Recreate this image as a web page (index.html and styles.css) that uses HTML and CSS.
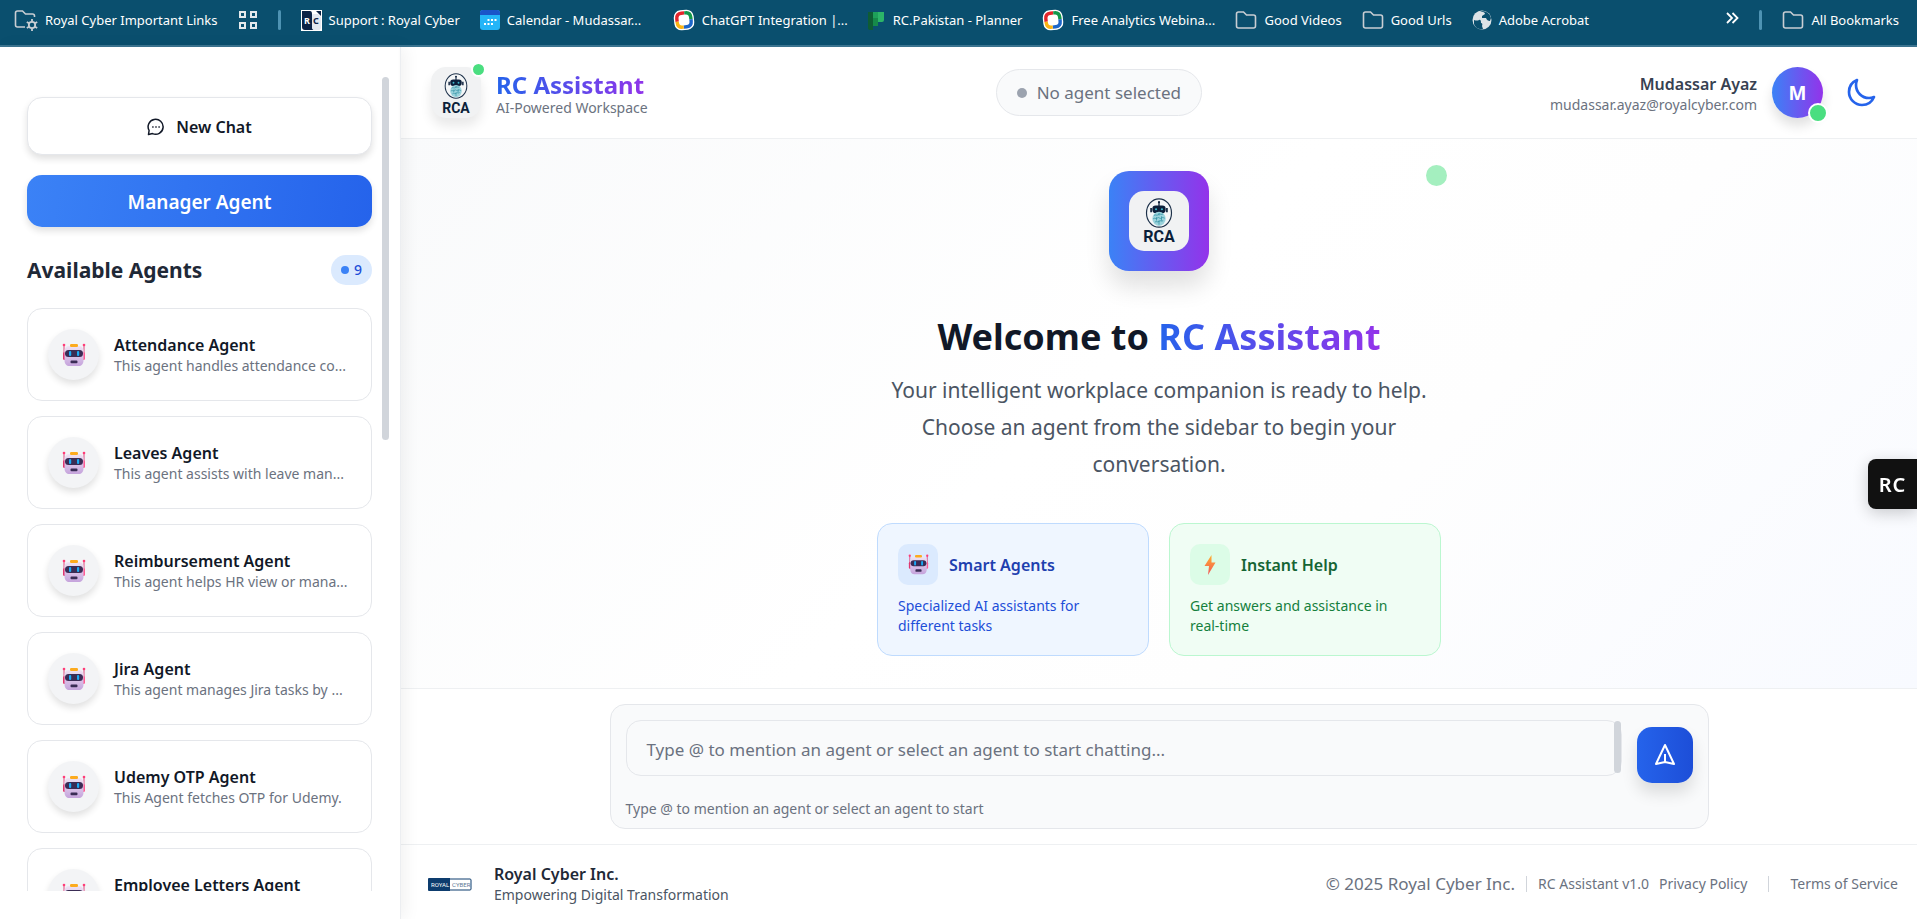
FILE: index.html
```html
<!DOCTYPE html>
<html lang="en">

<head>
    <meta charset="utf-8">
    <meta name="viewport" content="width=device-width, initial-scale=1.0">
    <title>RC Assistant</title>
    <link rel="stylesheet" href="styles.css">
</head>

<body>
    <!-- shared icons -->
    <svg class="sprite" aria-hidden="true">
        <defs>
            <linearGradient id="face" x1="0" y1="0" x2="0" y2="1">
                <stop offset="0" stop-color="#efe3f4" />
                <stop offset="1" stop-color="#c5a3dc" />
            </linearGradient>
            <linearGradient id="bolt" x1="0" y1="0" x2="0" y2="1">
                <stop offset="0" stop-color="#ffb02e" />
                <stop offset="1" stop-color="#f2555a" />
            </linearGradient>
        </defs>
        <symbol id="robot" viewBox="0 0 24 24">
            <path d="M2 2v10M22 2v10" stroke="#e0487f" stroke-width="1" />
            <circle cx="2" cy="2" r="1.3" fill="#ff3d78" />
            <circle cx="22" cy="2" r="1.3" fill="#ff3d78" />
            <rect x="1" y="9" width="3" height="8" rx="1.5" fill="#e0366e" />
            <rect x="20" y="9" width="3" height="8" rx="1.5" fill="#ff5c93" />
            <path d="M7 3h10c3 0 4.500 2 4.500 5v9c0 4-2 6-5 6h-9c-3 0-5-2-5-6V8c0-3 1.500-5 4.500-5z" fill="url(#face)" />
            <rect x="8" y="1" width="8" height="3" rx="1.2" fill="#fcab1e" />
            <rect x="3" y="7" width="18" height="7" rx="3.500" fill="#3a2c55" />
            <rect x="7" y="8" width="2.200" height="5" rx="1" fill="#19aaf5" />
            <rect x="15" y="8" width="2.200" height="5" rx="1" fill="#19aaf5" />
            <rect x="8.500" y="17.500" width="7" height="2.800" rx="1" fill="#3a2c55" />
        </symbol>
        <symbol id="rca" viewBox="0 0 32 36">
            <ellipse cx="16" cy="18" rx="15" ry="17" fill="#f4f6f7" stroke="#1c3049" stroke-width="1.400" />
            <path d="M16 5v5" stroke="#0b1f3a" stroke-width="1.500" />
            <circle cx="16" cy="5" r="1.300" fill="#0b1f3a" />
            <rect x="8" y="9" width="16" height="9" rx="4" fill="#0b1f3a" />
            <path d="M6.500 12v5M25.500 12v5" stroke="#0b1f3a" stroke-width="2" />
            <circle cx="12.500" cy="13.500" r="1.300" fill="#3fb8cc" />
            <circle cx="19.500" cy="13.500" r="1.300" fill="#3fb8cc" />
            <ellipse cx="16" cy="25" rx="8" ry="8.500" fill="#9bd3dc" />
            <path d="M10 21c2-2 3 1 5-1s4 1 6-1M9 25c2-2 3 1 5-1s3 2 5 0 3 1 4 0M11 29c2-2 3 1 5-1s3 1 5-1M16 18v3M13 23v4M19 22v5M16 27v5" fill="none" stroke="#2f8ea3" stroke-width=".9" />
        </symbol>
        <symbol id="folder" viewBox="0 0 22 20">
            <path d="M1.500 16V4q0-2 2-2h5l3 3h7q2 0 2 2v9q0 2-2 2h-15q-2 0-2-2z" fill="none" stroke="#c9ced3" stroke-width="1.600" />
        </symbol>
        <symbol id="ring" viewBox="0 0 22 22">
            <rect x="1" y="1" width="20" height="20" rx="7" fill="#fff" transform="rotate(-6 11 11)" />
            <g fill="none" stroke-width="3.400" transform="rotate(-6 11 11)">
                <path d="M4 12V9q0-5 5-5h3" stroke="#e4262c" />
                <path d="M12 4h1q5 0 5 5v2" stroke="#12984b" />
                <path d="M18 11v2q0 5-5 5h-3" stroke="#1d66c9" />
                <path d="M10 18H9q-5 0-5-5v-1" stroke="#fbb413" />
            </g>
        </symbol>
    </svg>

    <nav class="bookmarks" aria-label="Bookmarks">
        <a href="#"><svg width="24" height="22" viewBox="0 0 24 22">
                <path d="M11 18H3.500q-2 0-2-2V4q0-2 2-2h5l3 3h7q2 0 2 2v1" fill="none" stroke="#c9ced3" stroke-width="1.600" />
                <circle cx="18" cy="16" r="3.200" fill="none" stroke="#c9ced3" stroke-width="1.800" />
                <path d="M18 10v2.500M18 19.500V22M12.800 13l2.200 1.300M21 17.700l2.200 1.300M12.800 19l2.200-1.300M21 14.300l2.200-1.300" stroke="#c9ced3" stroke-width="1.800" />
            </svg>Royal Cyber Important Links</a>
        <a href="#" aria-label="Apps"><svg width="20" height="20" viewBox="0 0 20 20">
                <path d="M2 2h5v5H2zM13 2h5v5h-5zM2 13h5v5H2zM13 13h5v5h-5z" fill="none" stroke="#e3e9ec" stroke-width="2" />
            </svg></a>
        <span class="divider"></span>
        <a href="#"><svg width="21" height="21" viewBox="0 0 21 21">
                <path d="M0 0h21v21H0z" fill="#fff" />
                <path d="M1 1h8q2 0 2 3v13q0 2 2 3H4q-3 0-3-3z" fill="#0b2346" />
                <path d="M11 5q0-1 2-1h4l3 3v11q0 2-2 2h-5q-2 0-2-3z" fill="#e3e8f0" />
                <path d="M15 1h5v5z" fill="#0b2346" />
                <text x="3" y="14" class="rc-mark" fill="#fff">R</text>
                <text x="12" y="14" class="rc-mark" fill="#0b2346">C</text>
            </svg>Support : Royal Cyber</a>
        <a href="#" class="clipped"><svg width="20" height="20" viewBox="0 0 20 20">
                <rect width="20" height="20" rx="3" fill="#24b5f8" />
                <path d="M0 5V3q0-3 3-3h14q3 0 3 3v2z" fill="#1a55c9" />
                <path d="M7.500 9h2v2h-2zM11 9h2v2h-2zM14.500 9h2v2h-2zM4 13h2v2H4zM7.500 13h2v2h-2zM11 13h2v2h-2z" fill="#fff" />
            </svg>Calendar - Mudassar...</a>
        <a href="#" class="clipped"><svg width="22" height="22"><use href="#ring" /></svg>ChatGPT Integration |...</a>
        <a href="#"><svg width="20" height="20" viewBox="0 0 20 20">
                <path d="M2 2h5v18H4q-2 0-2-2z" fill="#0e5c34" />
                <path d="M7 2h5v14H7z" fill="#16894a" />
                <path d="M12 2h6v8q0 2-2 2h-4z" fill="#2cb568" />
                <path d="M7 2h5v6H7z" fill="#1ea05a" />
            </svg>RC.Pakistan - Planner</a>
        <a href="#" class="clipped"><svg width="22" height="22"><use href="#ring" /></svg>Free Analytics Webina...</a>
        <a href="#"><svg width="22" height="20"><use href="#folder" /></svg>Good Videos</a>
        <a href="#"><svg width="22" height="20"><use href="#folder" /></svg>Good Urls</a>
        <a href="#"><svg width="20" height="20" viewBox="0 0 20 20">
                <circle cx="10" cy="10" r="9.500" fill="#dde3e7" />
                <path d="M2 10q3 1 5 0t2 3q2 0 1 3l1 3q-7 1-9-5zM8 1.500q5 0 5 2.500l-3 2v2h4q1 3 4 3l1-3q-2-7-9-7z" fill="#0a4f6e" />
            </svg>Adobe Acrobat</a>
        <button type="button" class="more" aria-label="More bookmarks"><svg width="14" height="14" viewBox="0 0 14 14">
                <path d="M2 2l5 5-5 5M7.500 2l5 5-5 5" fill="none" stroke="#fff" stroke-width="1.800" />
            </svg></button>
        <span class="divider"></span>
        <a href="#"><svg width="22" height="20"><use href="#folder" /></svg>All Bookmarks</a>
    </nav>

    <div class="app">
        <aside class="sidebar">
            <div class="scroller">
                <button type="button" class="new-chat">
                    <svg width="18" height="18" viewBox="0 0 18 18" fill="none" stroke="#111827" stroke-width="1.500">
                        <path d="M1.500 16.500l.6-4A7.500 7.500 0 1 1 5.500 15.600z" stroke-linejoin="round" />
                        <path d="M5.200 9h1.400M8.300 9h1.400M11.400 9h1.400" />
                    </svg>
                    New Chat
                </button>
                <button type="button" class="manager">Manager Agent</button>
                <div class="list-head">
                    <h2>Available Agents</h2>
                    <span class="count">9</span>
                </div>
                <ul class="agents">
                    <li><button type="button"><span class="avatar"><svg width="24" height="24"><use href="#robot" /></svg></span>
                            <span class="info"><strong>Attendance Agent</strong><small>This agent handles attendance co...</small></span></button></li>
                    <li><button type="button"><span class="avatar"><svg width="24" height="24"><use href="#robot" /></svg></span>
                            <span class="info"><strong>Leaves Agent</strong><small>This agent assists with leave man...</small></span></button></li>
                    <li><button type="button"><span class="avatar"><svg width="24" height="24"><use href="#robot" /></svg></span>
                            <span class="info"><strong>Reimbursement Agent</strong><small>This agent helps HR view or mana...</small></span></button></li>
                    <li><button type="button"><span class="avatar"><svg width="24" height="24"><use href="#robot" /></svg></span>
                            <span class="info"><strong>Jira Agent</strong><small>This agent manages Jira tasks by ...</small></span></button></li>
                    <li><button type="button"><span class="avatar"><svg width="24" height="24"><use href="#robot" /></svg></span>
                            <span class="info"><strong>Udemy OTP Agent</strong><small>This Agent fetches OTP for Udemy.</small></span></button></li>
                    <li><button type="button"><span class="avatar"><svg width="24" height="24"><use href="#robot" /></svg></span>
                            <span class="info"><strong>Employee Letters Agent</strong></span></button></li>
                </ul>
            </div>
            <span class="thumb"></span>
        </aside>

        <div class="workspace">
            <header class="topbar">
                <div class="brand">
                    <div class="logo">
                        <svg width="26" height="26"><use href="#rca" /></svg>
                        <span>RCA</span>
                    </div>
                    <div class="name">
                        <h1 class="gradient-text">RC Assistant</h1>
                        <p>AI-Powered Workspace</p>
                    </div>
                </div>
                <div class="status">No agent selected</div>
                <div class="user">
                    <div class="who">
                        <strong>Mudassar Ayaz</strong>
                        <span>mudassar.ayaz@royalcyber.com</span>
                    </div>
                    <div class="initial">M</div>
                    <button type="button" class="theme" aria-label="Dark mode"><svg width="32" height="32" viewBox="0 0 24 24">
                            <path d="M21.750 15A9.700 9.700 0 0 1 18 15.750c-5.400 0-9.750-4.350-9.750-9.750 0-1.300.3-2.600.75-3.750A9.750 9.750 0 0 0 3 11.250C3 16.600 7.400 21 12.750 21a9.750 9.750 0 0 0 9-6z" fill="none" stroke="#2563eb" stroke-width="2" stroke-linejoin="round" />
                        </svg></button>
                </div>
            </header>

            <main class="welcome">
                <div class="hero-logo">
                    <div class="tile">
                        <svg width="30" height="30"><use href="#rca" /></svg>
                        <span>RCA</span>
                    </div>
                </div>
                <h2>Welcome to <span class="gradient-text">RC Assistant</span></h2>
                <p class="lead">Your intelligent workplace companion is ready to help.<br>Choose an agent from the sidebar to begin your<br>conversation.</p>
                <div class="features">
                    <section class="feature blue">
                        <h3><span><svg width="21" height="21"><use href="#robot" /></svg></span>Smart Agents</h3>
                        <p>Specialized AI assistants for<br>different tasks</p>
                    </section>
                    <section class="feature green">
                        <h3><span><svg width="20" height="20" viewBox="0 0 20 20">
                                    <path d="M11.500 0L4.500 11h4.500L8 20l7.500-12.500h-4z" fill="url(#bolt)" />
                                </svg></span>Instant Help</h3>
                        <p>Get answers and assistance in<br>real-time</p>
                    </section>
                </div>
                <span class="pulse"></span>
            </main>

            <form class="composer">
                <div class="box">
                    <div class="row">
                        <div class="field">
                            <textarea rows="1" aria-label="Message" aria-describedby="hint" placeholder="Type @ to mention an agent or select an agent to start chatting..."></textarea>
                            <span class="thumb"></span>
                        </div>
                        <button type="button" class="send" aria-label="Send"><svg width="24" height="24" viewBox="0 0 24 24" fill="none" stroke="#fff" stroke-width="2" stroke-linejoin="round">
                                <path d="M12 2l9 19-9-2-9 2zM12 19v-8" />
                            </svg></button>
                    </div>
                    <p id="hint">Type @ to mention an agent or select an agent to start</p>
                </div>
            </form>

            <footer>
                <svg class="company" width="44" height="13" viewBox="0 0 44 13">
                    <rect x="1" y="1" width="42" height="11" rx="1" fill="#fff" stroke="#0d3c6e" />
                    <path d="M1 0h21v13H1q-1 0-1-1V1q0-1 1-1z" fill="#0d3c6e" />
                    <text x="3" y="9" fill="#fff">ROYAL</text>
                    <text x="24" y="9" fill="#5d7896">CYBER</text>
                </svg>
                <div class="tagline">
                    <strong>Royal Cyber Inc.</strong>
                    <span>Empowering Digital Transformation</span>
                </div>
                <div class="legal">
                    <span class="copyright">© 2025 Royal Cyber Inc.</span>
                    <span class="bar"></span>
                    <span>RC Assistant v1.0</span>
                </div>
                <div class="links">
                    <a href="#">Privacy Policy</a>
                    <span class="bar"></span>
                    <a href="#">Terms of Service</a>
                </div>
            </footer>
        </div>
    </div>

    <button type="button" class="rc-tab">RC</button>
</body>

</html>
```
FILE: styles.css
```css
*, *::before, *::after {
    box-sizing: border-box;
}

body {
    background: #fff;
    color: #111827;
    display: flex;
    flex-direction: column;
    font-family: "Noto Sans", "Open Sans", sans-serif;
    font-size: 14px;
    height: 100vh;
    line-height: 20px;
    margin: 0;
    overflow: hidden;
}

h1, h2, h3, p, ul {
    margin: 0;
    padding: 0;
}

button {
    border: 0;
    cursor: pointer;
    font-family: inherit;
    padding: 0;
}

svg {
    flex: none;
}

.sprite {
    height: 0;
    position: absolute;
    width: 0;
}

strong {
    font-weight: 600;
}

.gradient-text {
    background: linear-gradient(90deg, #2563eb, #9333ea);
    background-clip: text;
    -webkit-background-clip: text;
    color: transparent;
}

/* bookmarks bar */

.bookmarks {
    align-items: center;
    background: #0a4f6e;
    border-bottom: 2px solid #3c7591;
    display: flex;
    flex: none;
    gap: 20px;
    height: 47px;
    padding: 0 18px 5px 14px;
}

.bookmarks a {
    align-items: center;
    color: #fff;
    display: flex;
    font-size: 13px;
    gap: 7px;
    text-decoration: none;
    white-space: nowrap;
}

.bookmarks .clipped {
    width: 173px;
}

.bookmarks .divider {
    background: #4e93b3;
    border-radius: 2px;
    height: 20px;
    width: 3px;
}

.bookmarks .more {
    background: none;
    margin-left: auto;
}

.rc-mark {
    font-size: 9px;
    font-weight: 700;
}

/* sidebar */

.app {
    display: flex;
    flex: 1;
    min-height: 0;
}

.sidebar {
    border-right: 1px solid #eceef1;
    box-shadow: 4px 0 16px rgba(0, 0, 0, .06);
    flex: none;
    padding: 30px 28px 28px 27px;
    position: relative;
    width: 401px;
    z-index: 1;
}

.sidebar .scroller {
    height: 100%;
    margin: 0 -10px;
    overflow: hidden;
    padding: 20px 10px 0;
}

.thumb {
    background: #d1d5db;
    border-radius: 4px;
    position: absolute;
    width: 7px;
}

.sidebar .thumb {
    height: 363px;
    right: 11px;
    top: 30px;
}

.new-chat, .manager {
    align-items: center;
    border-radius: 15px;
    box-shadow: 0 4px 7px rgba(0, 0, 0, .12);
    display: flex;
    justify-content: center;
    width: 100%;
}

.new-chat {
    background: #fff;
    border: 1px solid #e5e7eb;
    color: #111827;
    font-size: 16px;
    font-weight: 600;
    gap: 11px;
    height: 58px;
    padding-top: 2px;
}

.manager {
    background: linear-gradient(100deg, #3b82f6, #2563eb);
    color: #fff;
    font-size: 19px;
    font-weight: 600;
    height: 52px;
    margin-top: 20px;
    padding-top: 2px;
}

.list-head {
    align-items: center;
    display: flex;
    justify-content: space-between;
    margin: 28px 0 23px;
}

.list-head h2 {
    color: #1f2937;
    font-size: 21px;
    line-height: 30px;
}

.count {
    align-items: center;
    background: #dbeafe;
    border-radius: 15px;
    color: #1d4ed8;
    display: flex;
    font-weight: 500;
    gap: 5px;
    height: 30px;
    padding: 0 10px;
}

.count::before {
    background: #3b82f6;
    border-radius: 50%;
    content: "";
    height: 8px;
    width: 8px;
}

.agents {
    display: flex;
    flex-direction: column;
    gap: 15px;
    list-style: none;
}

.agents button {
    align-items: center;
    background: #fff;
    border: 1px solid #e5e7eb;
    border-radius: 15px;
    color: #111827;
    display: flex;
    gap: 15px;
    height: 93px;
    padding: 0 20px;
    text-align: left;
    width: 100%;
}

.avatar {
    align-items: center;
    background: #f3f4f6;
    border-radius: 50%;
    box-shadow: 0 4px 7px rgba(0, 0, 0, .12);
    display: flex;
    flex: none;
    height: 51px;
    justify-content: center;
    width: 51px;
}

.info {
    display: flex;
    flex-direction: column;
    height: 42px;
}

.info strong {
    font-size: 16px;
    line-height: 22px;
    white-space: nowrap;
}

.info small {
    color: #6b7280;
    font-size: 14px;
    line-height: 20px;
    white-space: nowrap;
}

/* top bar */

.workspace {
    display: flex;
    flex: 1;
    flex-direction: column;
    min-width: 0;
}

.topbar {
    align-items: center;
    border-bottom: 1px solid #eef0f2;
    box-shadow: 0 1px 4px rgba(0, 0, 0, .06);
    display: flex;
    flex: none;
    height: 92px;
    justify-content: space-between;
    padding: 0 40px 0 30px;
    z-index: 0;
}

.brand {
    align-items: center;
    display: flex;
    gap: 15px;
}

.logo {
    align-items: center;
    background: #f1f2f3;
    border-radius: 15px;
    box-shadow: 0 8px 12px rgba(0, 0, 0, .09);
    display: flex;
    flex-direction: column;
    gap: 2px;
    height: 51px;
    padding-top: 6px;
    position: relative;
    width: 50px;
}

.logo::after {
    background: #4ade80;
    border: 2px solid #fff;
    border-radius: 50%;
    content: "";
    height: 15px;
    position: absolute;
    right: -5px;
    top: -5px;
    width: 15px;
}

.logo span, .tile span {
    color: #0b1f3a;
    font-family: Roboto, sans-serif;
    font-size: 14px;
    font-weight: 700;
    line-height: 14px;
}

.name, .who {
    padding-top: 3px;
}

.brand h1 {
    font-size: 24px;
    line-height: 28px;
}

.brand p {
    color: #6b7280;
    line-height: 18px;
}

.status {
    align-items: center;
    background: #f9fafb;
    border: 1px solid #e5e7eb;
    border-radius: 24px;
    color: #6b7280;
    display: flex;
    font-size: 17px;
    gap: 10px;
    height: 47px;
    padding: 0 20px;
}

.status::before {
    background: #9ca3af;
    border-radius: 50%;
    content: "";
    height: 10px;
    width: 10px;
}

.user {
    align-items: center;
    display: flex;
    gap: 15px;
}

.who {
    display: flex;
    flex-direction: column;
    text-align: right;
}

.who strong {
    color: #374151;
    font-size: 16px;
    line-height: 22px;
}

.who span {
    color: #6b7280;
}

.initial {
    align-items: center;
    background: linear-gradient(90deg, #3b82f6, #9333ea);
    border-radius: 50%;
    box-shadow: 0 8px 12px rgba(0, 0, 0, .12);
    color: #fff;
    display: flex;
    font-size: 19px;
    font-weight: 700;
    height: 51px;
    justify-content: center;
    position: relative;
    width: 51px;
}

.initial::after {
    background: #4ade80;
    border: 2px solid #fff;
    border-radius: 50%;
    bottom: -5px;
    content: "";
    height: 20px;
    position: absolute;
    right: -5px;
    width: 20px;
}

.theme {
    background: none;
    height: 32px;
    margin-left: 7px;
    width: 32px;
}

/* welcome screen */

.welcome {
    align-items: center;
    background: linear-gradient(135deg, #f9fafb, #fff 45%, #fefefe 65%, #f8faff);
    display: flex;
    flex: 1;
    flex-direction: column;
    padding-top: 32px;
    position: relative;
}

.hero-logo {
    align-items: center;
    background: linear-gradient(90deg, #3b82f6, #9333ea);
    border-radius: 20px;
    box-shadow: 0 16px 24px rgba(0, 0, 0, .12);
    display: flex;
    height: 100px;
    justify-content: center;
    width: 100px;
}

.tile {
    align-items: center;
    background: #f1f2f3;
    border-radius: 15px;
    display: flex;
    flex-direction: column;
    gap: 2px;
    height: 60px;
    padding-top: 7px;
    width: 60px;
}

.tile span {
    font-size: 16px;
}

.welcome h2 {
    font-size: 36px;
    line-height: 46px;
    margin-top: 43px;
}

.lead {
    color: #4b5563;
    font-size: 21px;
    line-height: 37px;
    margin-top: 12px;
    text-align: center;
}

.features {
    display: grid;
    gap: 20px;
    grid-template-columns: 272px 272px;
    margin-top: 40px;
}

.feature {
    border: 1px solid;
    border-radius: 15px;
    height: 133px;
    padding: 20px;
}

.feature h3 {
    align-items: center;
    display: flex;
    font-size: 16px;
    font-weight: 600;
    gap: 11px;
    margin-bottom: 11px;
}

.feature h3 span {
    align-items: center;
    border-radius: 10px;
    display: flex;
    height: 41px;
    justify-content: center;
    width: 40px;
}

.blue {
    background: #eff6ff;
    border-color: #bfdbfe;
    color: #1d4ed8;
}

.blue h3 {
    color: #1e40af;
}

.blue h3 span {
    background: #dbeafe;
}

.green {
    background: #f0fdf4;
    border-color: #bbf7d0;
    color: #15803d;
}

.green h3 {
    color: #166534;
}

.green h3 span {
    background: #dcfce7;
}

.pulse {
    background: #a4efbf;
    border-radius: 50%;
    height: 21px;
    left: calc(50% + 267px);
    position: absolute;
    top: 26px;
    width: 21px;
}

/* composer */

.composer {
    border-top: 1px solid #eef0f2;
    padding: 15px 16px;
}

.box {
    background: #f9fafb;
    border: 1px solid #e5e7eb;
    border-radius: 15px;
    height: 125px;
    margin: 0 auto;
    max-width: 1099px;
    padding: 15px;
}

.row {
    display: flex;
    gap: 15px;
}

.field {
    flex: 1;
    height: 56px;
    position: relative;
}

.field textarea {
    background: #f9fafb;
    border: 1px solid #e5e7eb;
    border-radius: 15px;
    display: block;
    font-family: inherit;
    font-size: 17px;
    height: 56px;
    line-height: 26px;
    overflow: hidden;
    padding: 16px 20px 12px;
    resize: none;
    width: 100%;
}

.field textarea::placeholder {
    color: #6b7280;
}

.field .thumb {
    height: 52px;
    right: 1px;
    top: 1px;
}

.send {
    align-items: center;
    background: linear-gradient(90deg, #2563eb, #1d4ed8);
    border-radius: 15px;
    box-shadow: 0 10px 16px rgba(0, 0, 0, .12);
    display: flex;
    height: 56px;
    justify-content: center;
    margin-top: 7px;
    width: 56px;
}

#hint {
    color: #6b7280;
    margin-top: 16px;
}

/* footer */

footer {
    align-items: center;
    border-top: 1px solid #eef0f2;
    color: #6b7280;
    display: flex;
    flex: none;
    height: 75px;
    padding: 4px 19px 0 27px;
}

.company text {
    font-family: Roboto, sans-serif;
    font-size: 6px;
}

.tagline {
    color: #4b5563;
    display: flex;
    flex-direction: column;
    margin-left: 22px;
}

.tagline strong {
    color: #1f2937;
    font-size: 16px;
    line-height: 22px;
}

.legal, .links {
    align-items: center;
    display: flex;
}

.legal {
    gap: 11px;
    margin-left: auto;
}

.copyright {
    font-size: 17px;
}

.links {
    gap: 21px;
    margin-left: 10px;
}

.links a {
    color: inherit;
    text-decoration: none;
}

.bar {
    background: #d1d5db;
    height: 16px;
    width: 1px;
}

/* floating tab on the window edge */

.rc-tab {
    background: #111;
    border-radius: 8px 0 0 8px;
    box-shadow: 0 4px 16px rgba(0, 0, 0, .2);
    color: #fff;
    font-size: 20px;
    font-weight: 600;
    height: 50px;
    letter-spacing: 1px;
    position: fixed;
    right: 0;
    top: 459px;
    width: 49px;
    z-index: 2;
}
```
